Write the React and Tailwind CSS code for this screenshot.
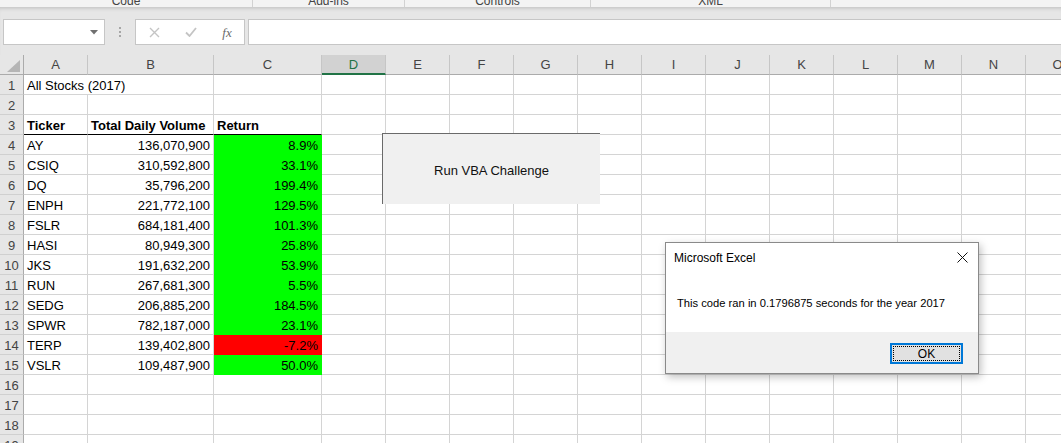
import React from "react";

// ribbon group labels (only the bottom of the ribbon shows)
const groups = [
  { label: "Code", w: "w-[253px]" },
  { label: "Add-ins", w: "w-[152px]" },
  { label: "Controls", w: "w-[186px]" },
  { label: "XML", w: "w-[240px]" },
];

const letters = ["A", "B", "C", "D", "E", "F", "G", "H", "I", "J", "K", "L", "M", "N", "O"];

const stocks = [
  ["AY", "136,070,900", "8.9%"],
  ["CSIQ", "310,592,800", "33.1%"],
  ["DQ", "35,796,200", "199.4%"],
  ["ENPH", "221,772,100", "129.5%"],
  ["FSLR", "684,181,400", "101.3%"],
  ["HASI", "80,949,300", "25.8%"],
  ["JKS", "191,632,200", "53.9%"],
  ["RUN", "267,681,300", "5.5%"],
  ["SEDG", "206,885,200", "184.5%"],
  ["SPWR", "782,187,000", "23.1%"],
  ["TERP", "139,402,800", "-7.2%"],
  ["VSLR", "109,487,900", "50.0%"],
];

const cell = "h-[20px] border-r border-b border-[#d4d4d4] px-[3px] leading-[21px] text-[13px] text-black whitespace-nowrap overflow-hidden";

function Row({ n }) {
  const stock = n >= 4 && n <= 15 ? stocks[n - 4] : null;
  const empties = Array.from({ length: 12 });
  return (
    <>
      <div className="h-[20px] bg-[#e6e6e6] border-r border-b border-r-[#ababab] border-b-[#d0d0d0] text-center leading-[21px] text-[13px] text-[#444]">{n}</div>
      {n === 1 && (
        <div className="h-[20px] border-b border-[#d4d4d4] px-[3px] leading-[21px] text-[13px] text-black whitespace-nowrap relative z-10">All Stocks (2017)</div>
      )}
      {n === 3 && (
        <>
          <div className={`${cell} font-bold border-b-black`}>Ticker</div>
          <div className={`${cell} font-bold border-b-black`}>Total Daily Volume</div>
          <div className={`${cell} font-bold border-b-black`}>Return</div>
        </>
      )}
      {stock && (
        <>
          <div className={cell}>{stock[0]}</div>
          <div className={`${cell} text-right`}>{stock[1]}</div>
          <div className={`${cell} text-right border-r-0 border-b-0 pr-[4px] ${stock[2].startsWith("-") ? "bg-[#ff0000]" : "bg-[#00ff00]"}`}>{stock[2]}</div>
        </>
      )}
      {(n === 2 || n > 15) && (
        <>
          <div className={cell}></div>
          <div className={cell}></div>
          <div className={cell}></div>
        </>
      )}
      {n === 1 && (
        <>
          <div className={cell}></div>
          <div className={cell}></div>
        </>
      )}
      {empties.map((_, i) => (
        <div key={i} className={cell}></div>
      ))}
    </>
  );
}

export default function App() {
  return (
    <div className="w-[1061px] h-[443px] overflow-hidden relative bg-white font-['Liberation_Sans',Arial,sans-serif]">
      {/* ribbon bottom */}
      <div className="h-[7px] bg-[#f3f3f3] flex overflow-hidden">
        {groups.map((g) => (
          <div key={g.label} className={`${g.w} shrink-0 border-r border-[#d2d2d2] text-center text-[12px] leading-[12px] text-[#444]`}>
            <div className="-mt-[5px]">{g.label}</div>
          </div>
        ))}
      </div>

      {/* formula bar */}
      <div className="h-[48px] bg-[#e6e6e6] pt-[12px] flex items-start shadow-[inset_0_4px_4px_-3px_rgba(0,0,0,0.18)]">
        <div className="ml-[3px] w-[102px] h-[26px] bg-white border border-[#c6c6c6] flex items-center justify-end pr-[6px]">
          <svg width="8" height="5" viewBox="0 0 8 5"><path d="M0 0h8L4 4.5z" fill="#707070" /></svg>
        </div>
        <div className="w-[30px] h-[26px] flex flex-col items-center justify-center gap-[2px]">
          <span className="w-[2px] h-[2px] bg-[#a6a6a6]" />
          <span className="w-[2px] h-[2px] bg-[#a6a6a6]" />
          <span className="w-[2px] h-[2px] bg-[#a6a6a6]" />
        </div>
        <div className="w-[110px] h-[26px] bg-white border border-[#c6c6c6] flex items-center">
          <div className="w-[36px] flex justify-center">
            <svg width="11" height="11" viewBox="0 0 11 11"><path d="M1 1l9 9M10 1l-9 9" stroke="#c4c4c4" strokeWidth="1.4" /></svg>
          </div>
          <div className="w-[38px] flex justify-center">
            <svg width="12" height="10" viewBox="0 0 12 10"><path d="M1 5.5l3.5 3.5L11 1" stroke="#c4c4c4" strokeWidth="1.8" fill="none" /></svg>
          </div>
          <div className="w-[34px] flex justify-center font-['Liberation_Serif',serif] italic text-[13px] text-[#6a6a6a] leading-none">
            fx
          </div>
        </div>
        <div className="ml-[3px] flex-1 h-[26px] bg-white border border-r-0 border-[#c6c6c6]" />
      </div>

      {/* sheet grid */}
      <div className="grid grid-cols-[24px_64px_126px_108px_repeat(12,64px)] w-[1090px]">
        <div className="h-[20px] bg-[#e6e6e6] border-r border-b border-[#ababab] flex items-end justify-end pr-[3px] pb-[2px]">
          <svg width="13" height="12" viewBox="0 0 13 12"><path d="M13 0V12H0z" fill="#b5b5b5" /></svg>
        </div>
        {letters.map((l) =>
          l === "D" ? (
            <div key={l} className="h-[20px] bg-[#d2d2d2] border-r border-r-[#c6c6c6] border-b-2 border-b-[#217346] text-center leading-[20px] text-[13px] text-[#217346]">{l}</div>
          ) : (
            <div key={l} className="h-[20px] bg-[#e6e6e6] border-r border-r-[#c6c6c6] border-b border-b-[#ababab] text-center leading-[20px] text-[13px] text-[#444]">{l}</div>
          )
        )}
        {Array.from({ length: 19 }).map((_, i) => (
          <Row key={i} n={i + 1} />
        ))}
      </div>

      {/* form button on the sheet */}
      <div className="absolute left-[382px] top-[133px] w-[218px] h-[71px] bg-[#f0f0f0] border-l border-t border-[#6a6a6a] flex items-center justify-center pt-[4px] text-[13px] text-[#111]">
        Run VBA Challenge
      </div>

      {/* message box */}
      <div className="absolute left-[665px] top-[242px] w-[314px] h-[132px] bg-white border border-[#8a8a8a] shadow-[2px_3px_8px_rgba(0,0,0,0.25)] flex flex-col">
        <div className="h-[29px] flex items-center justify-between pl-[8px] pr-[10px]">
          <span className="text-[12px] text-black">Microsoft Excel</span>
          <svg width="11" height="11" viewBox="0 0 11 11"><path d="M0.5 0.5l10 10M10.5 0.5l-10 10" stroke="#111" strokeWidth="1" /></svg>
        </div>
        <div className="h-[60px] flex items-center pl-[11px] pt-[2px] text-[11.2px] text-black">
          This code ran in 0.1796875 seconds for the year 2017
        </div>
        <div className="flex-1 bg-[#f0f0f0] flex justify-end items-start pt-[11px] pr-[15px]">
          <div className="relative w-[73px] h-[21px] bg-[#e1e1e1] border-2 border-[#0078d7] flex items-center justify-center text-[12px] text-black">
            <span className="absolute inset-[1px] border border-dotted border-black" />
            OK
          </div>
        </div>
      </div>
    </div>
  );
}
